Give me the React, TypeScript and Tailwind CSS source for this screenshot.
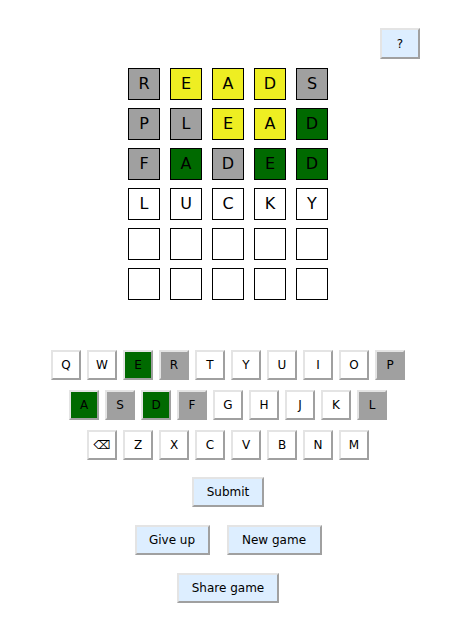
const font = { fontFamily: '"DejaVu Sans", Verdana, sans-serif' };

type Mark = 'g' | 'y' | 'x' | '';

const guesses: { word: string; marks: Mark[] }[] = [
  { word: 'READS', marks: ['x', 'y', 'y', 'y', 'x'] },
  { word: 'PLEAD', marks: ['x', 'x', 'y', 'y', 'g'] },
  { word: 'FADED', marks: ['x', 'g', 'x', 'g', 'g'] },
  { word: 'LUCKY', marks: ['', '', '', '', ''] },
  { word: '     ', marks: ['', '', '', '', ''] },
  { word: '     ', marks: ['', '', '', '', ''] },
];

const tileColor: Record<Mark, string> = {
  g: 'bg-[#006a00]',
  y: 'bg-[#eeee22]',
  x: 'bg-[#a0a0a0]',
  '': 'bg-white',
};

const keyRows = [
  ['Q', 'W', 'E', 'R', 'T', 'Y', 'U', 'I', 'O', 'P'],
  ['A', 'S', 'D', 'F', 'G', 'H', 'J', 'K', 'L'],
  ['⌫', 'Z', 'X', 'C', 'V', 'B', 'N', 'M'],
];

const keyState: Record<string, Mark> = {
  E: 'g', A: 'g', D: 'g',
  R: 'x', P: 'x', S: 'x', F: 'x', L: 'x',
};

function Button({ label, w }: { label: string; w: string }) {
  return (
    <button
      className={`${w} h-[30px] bg-[#ddeeff] text-[12px] text-black border-2 border-t-[#e4e4e4] border-l-[#e4e4e4] border-b-[#a0a0a0] border-r-[#a0a0a0]`}
      style={font}
    >
      {label}
    </button>
  );
}

export default function App() {
  return (
    <div className="w-[456px] h-[630px] bg-white relative" style={font}>
      <div className="flex justify-end pt-[28px] pr-[36px]">
        <button className="w-[40px] h-[31px] bg-[#ddeeff] text-[12px] border-2 border-t-[#e4e4e4] border-l-[#e4e4e4] border-b-[#a0a0a0] border-r-[#a0a0a0]">
          ?
        </button>
      </div>

      <div className="flex flex-col items-center gap-[8px] mt-[9px]">
        {guesses.map((g, r) => (
          <div key={r} className="flex gap-[10px]">
            {g.word.split('').map((ch, c) => (
              <div
                key={c}
                className={`w-[32px] h-[32px] border-[1.5px] border-black flex items-center justify-center text-[16px] text-black ${tileColor[g.marks[c]]}`}
              >
                {ch.trim()}
              </div>
            ))}
          </div>
        ))}
      </div>

      <div className="flex flex-col items-center gap-[10px] mt-[50px]">
        {keyRows.map((row, i) => (
          <div key={i} className="flex gap-[6px]">
            {row.map((k) => {
              const s = keyState[k] ?? '';
              const bg = s === 'g' ? 'bg-[#006a00]' : s === 'x' ? 'bg-[#a0a0a0]' : 'bg-white';
              return (
                <div
                  key={k}
                  className={`w-[30px] h-[30px] flex items-center justify-center text-[12px] text-black border-2 border-t-[#e4e4e4] border-l-[#e4e4e4] border-b-[#a0a0a0] border-r-[#a0a0a0] ${bg}`}
                >
                  {k}
                </div>
              );
            })}
          </div>
        ))}
      </div>

      <div className="flex flex-col items-center gap-[18px] mt-[17px]">
        <Button label="Submit" w="w-[72px]" />
        <div className="flex gap-[17px]">
          <Button label="Give up" w="w-[75px]" />
          <Button label="New game" w="w-[95px]" />
        </div>
        <Button label="Share game" w="w-[102px]" />
      </div>
    </div>
  );
}
